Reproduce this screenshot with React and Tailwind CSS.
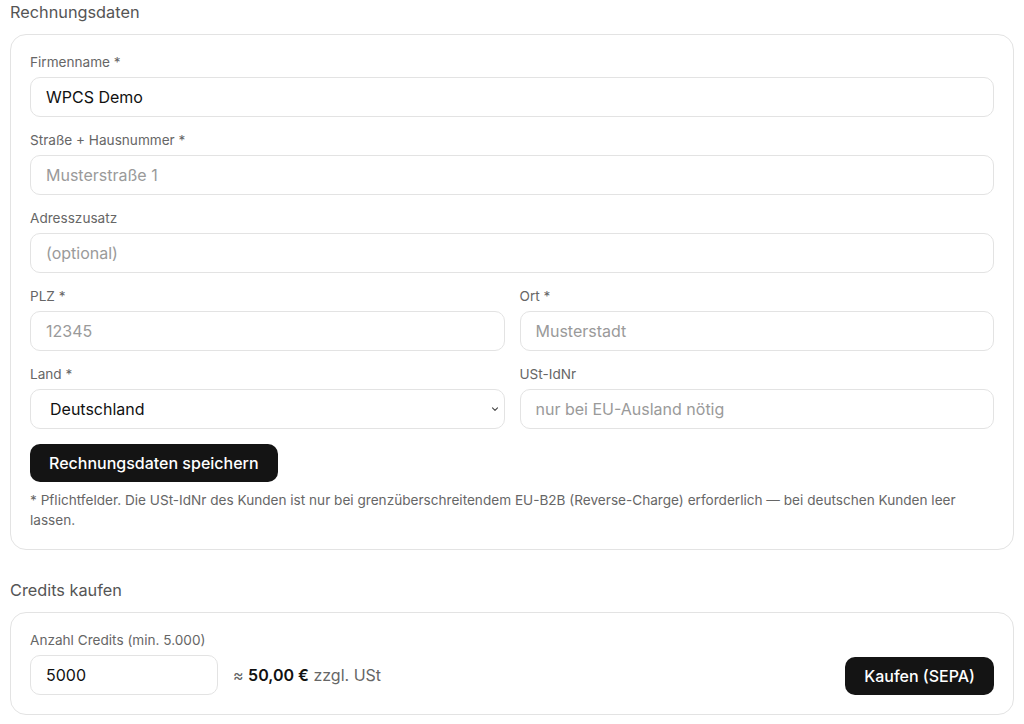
import React, { useState } from "react";

const font = { fontFamily: "Inter, 'Noto Sans', sans-serif" };

const inputBase =
  "h-10 rounded-[10px] border border-[#e3e3e3] bg-white px-[15px] text-[16px] text-[#111] placeholder:text-[#9a9a9a] outline-none";
const inputCls = `w-full ${inputBase}`;

function Field({ label, children }) {
  return (
    <div className="flex flex-col">
      <label className="text-[13.6px] leading-5 text-[#666] mb-[5px]">{label}</label>
      {children}
    </div>
  );
}

function Chevron() {
  return (
    <svg width="10" height="10" viewBox="0 0 10 10" className="absolute right-[5px] top-1/2 -translate-y-1/2 text-[#444]" fill="none" stroke="currentColor" strokeWidth="1.1" strokeLinecap="round" strokeLinejoin="round">
      <path d="M2.5 3.8 L5 6.3 L7.5 3.8" />
    </svg>
  );
}

export default function App() {
  const [firma, setFirma] = useState("WPCS Demo");
  const [land, setLand] = useState("DE");
  const [credits, setCredits] = useState("5000");

  return (
    <div className="w-full min-h-screen bg-white px-[10px]" style={font}>
      <h2 className="text-[16.3px] leading-6 text-[#555] mb-[10px]">Rechnungsdaten</h2>

      <div className="rounded-[16px] border border-[#e3e3e3] p-[19px] pt-[17px]">
        <div className="flex flex-col gap-[13px]">
          <Field label="Firmenname *">
            <input className={inputCls} value={firma} onChange={(e) => setFirma(e.target.value)} />
          </Field>
          <Field label="Straße + Hausnummer *">
            <input className={inputCls} placeholder="Musterstraße 1" />
          </Field>
          <Field label="Adresszusatz">
            <input className={inputCls} placeholder="(optional)" />
          </Field>
          <div className="grid grid-cols-2 gap-x-[15px] gap-y-[13px]">
            <Field label="PLZ *">
              <input className={inputCls} placeholder="12345" />
            </Field>
            <Field label="Ort *">
              <input className={inputCls} placeholder="Musterstadt" />
            </Field>
            <Field label="Land *">
              <div className="relative">
                <select
                  value={land}
                  onChange={(e) => setLand(e.target.value)}
                  className={`${inputCls} appearance-none pl-[19px] pr-8`}
                >
                  <option value="DE">Deutschland</option>
                  <option value="AT">Österreich</option>
                  <option value="CH">Schweiz</option>
                </select>
                <Chevron />
              </div>
            </Field>
            <Field label="USt-IdNr">
              <input className={inputCls} placeholder="nur bei EU-Ausland nötig" />
            </Field>
          </div>
        </div>

        <button className="mt-[15px] h-[38px] px-[19px] rounded-[10px] bg-[#141414] text-white text-[16px] font-medium">
          Rechnungsdaten speichern
        </button>

        <p className="mt-2 text-[13.6px] leading-5 text-[#666]">
          * Pflichtfelder. Die USt-IdNr des Kunden ist nur bei grenzüberschreitendem EU-B2B (Reverse-Charge) erforderlich — bei deutschen Kunden leer lassen.
        </p>
      </div>

      <h2 className="mt-[28px] text-[16.3px] leading-6 text-[#555] mb-[10px]">Credits kaufen</h2>

      <div className="rounded-[16px] border border-[#e3e3e3] px-[19px] pt-[17px] pb-[19px]">
        <label className="block text-[13.6px] leading-5 text-[#666] mb-[5px]">Anzahl Credits (min. 5.000)</label>
        <div className="flex items-center gap-[15px]">
          <input className={`${inputBase} w-[188px] shrink-0`} value={credits} onChange={(e) => setCredits(e.target.value)} />
          <div className="whitespace-nowrap text-[16px] text-[#666]">
            ≈ <span className="font-semibold text-[#111]">50,00 €</span> zzgl. USt
          </div>
          <button className="ml-auto mt-[2px] shrink-0 whitespace-nowrap h-[38px] px-[19px] rounded-[10px] bg-[#141414] text-white text-[16px] font-medium">
            Kaufen (SEPA)
          </button>
        </div>
      </div>
    </div>
  );
}
